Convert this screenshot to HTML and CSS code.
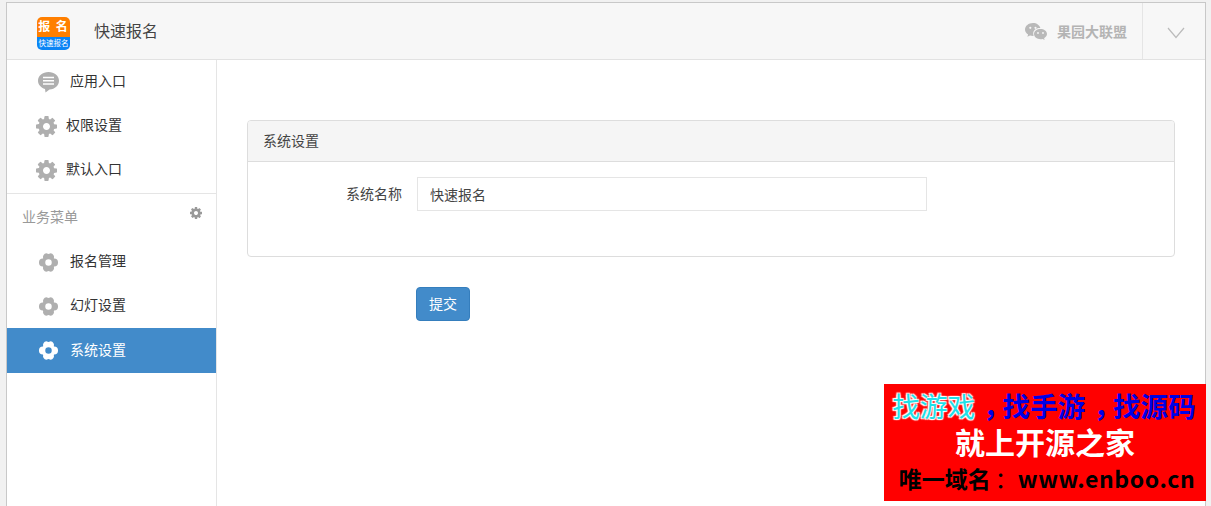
FILE: index.html
```html
<!DOCTYPE html>
<html lang="zh-CN">
<head>
<meta charset="utf-8">
<title>快速报名</title>
<link rel="stylesheet" href="styles.css">
</head>
<body>
<svg class="defs" width="0" height="0" aria-hidden="true">
  <defs>
    <symbol id="cog" viewBox="0 0 1536 1536"><path fill-rule="evenodd" d="M1024 768q0-106-75-181t-181-75-181 75-75 181 75 181 181 75 181-75 75-181zm512-109v222q0 12-8 23t-20 13l-185 28q-19 54-39 91 35 50 107 138 10 12 10 25t-9 23q-27 37-99 108t-94 71q-12 0-26-9l-138-108q-44 23-91 38-16 136-29 186-7 28-36 28h-222q-14 0-24.5-8.5t-11.5-21.5l-28-184q-49-16-90-37l-141 107q-10 9-25 9-14 0-25-11-126-114-165-168-7-10-7-23 0-12 8-23 15-21 51-66.5t54-70.5q-27-50-41-99l-183-27q-13-2-21-12.5t-8-23.5v-222q0-12 8-23t19-13l186-28q14-46 39-92-40-57-107-138-10-12-10-24 0-10 9-23 26-36 98.5-107.5t94.5-71.5q13 0 26 10l138 107q44-23 91-38 16-136 29-186 7-28 36-28h222q14 0 24.5 8.5t11.5 21.5l28 184q49 16 90 37l142-107q9-9 24-9 13 0 25 10 129 119 165 170 7 8 7 22 0 12-8 23-15 21-51 66.5t-54 70.5q26 50 41 98l183 28q13 2 21 12.5t8 23.5z"/></symbol>
    <symbol id="flower" viewBox="0 0 24 24"><path fill-rule="evenodd" d="M18.4 7.5A4.4 4.4 0 0 1 18.4 16.500L18.1 17A4.4 4.4 0 0 1 14.500 22.600L12 21.800L9.500 22.600A4.4 4.4 0 0 1 5.900 17L5.600 16.500A4.4 4.4 0 0 1 5.600 7.500L5.900 7A4.4 4.4 0 0 1 9.500 1.400L12 2.200L14.500 1.400A4.4 4.400 0 0 1 18.100 7ZM12 8.300A3.700 3.700 0 1 0 12 15.700A3.700 3.700 0 1 0 12 8.300Z"/></symbol>
  </defs>
</svg>
<div class="app">
  <header class="topbar">
    <div class="logo">
      <div class="logo-top">报 名</div>
      <div class="logo-bottom">快速报名</div>
    </div>
    <div class="app-title">快速报名</div>
    <div class="account">
      <svg class="wechat" viewBox="0 0 22 17"><path d="M8 0C3.600 0 0 2.900 0 6.500c0 2.100 1.200 3.800 3.100 5L2.400 13.700l2.600-1.300c.9.300 1.900.5 3 .5h.6a5.500 5.500 0 0 1-.3-1.700C7.700 7.700 10.800 5 14.800 5h.6C14.600 2.100 11.600 0 8 0z"/><path d="M22 11.100C22 8 18.900 6 15.500 6S9 8 9 11.100s3.100 5.100 6.500 5.100c.7 0 1.400-.1 2.100-.3l2 1.100-.5-1.800c1.700-1.100 2.900-2.500 2.900-4.100z"/><circle cx="5.300" cy="4.800" r="1.100" fill="#f7f7f7"/><circle cx="10.500" cy="4.800" r="1.100" fill="#f7f7f7"/><circle cx="13" cy="10" r=".9" fill="#f7f7f7"/><circle cx="18" cy="10" r=".9" fill="#f7f7f7"/></svg>
      <span class="account-name">果园大联盟</span>
    </div>
    <div class="toggle">
      <svg class="chevron" viewBox="0 0 18 12"><polyline points="1,1 9,10.500 17,1"/></svg>
    </div>
  </header>
  <div class="content">
    <aside class="sidebar">
      <a class="nav-item first">
        <svg class="nav-icon chat" viewBox="0 0 21 21"><path d="M10.500 0C4.700 0 0 3.900 0 8.800c0 3.800 2.900 7 7 8.200L7.500 20.500 11.500 17.500C17 17.200 21 13.500 21 8.800 21 3.900 16.300 0 10.500 0z"/><path class="chat-lines" d="M5 5.500h11M5 8.800h11M5 12h11"/></svg>
        <span>应用入口</span>
      </a>
      <a class="nav-item tight"><svg class="nav-icon cog"><use href="#cog"/></svg><span>权限设置</span></a>
      <a class="nav-item tight"><svg class="nav-icon cog"><use href="#cog"/></svg><span>默认入口</span></a>
      <div class="nav-section">
        <span>业务菜单</span>
        <svg class="section-cog"><use href="#cog"/></svg>
      </div>
      <a class="nav-item raised"><svg class="nav-icon flower"><use href="#flower"/></svg><span>报名管理</span></a>
      <a class="nav-item raised"><svg class="nav-icon flower"><use href="#flower"/></svg><span>幻灯设置</span></a>
      <a class="nav-item active"><svg class="nav-icon flower"><use href="#flower"/></svg><span>系统设置</span></a>
    </aside>
    <main class="main">
      <section class="panel">
        <div class="panel-heading">系统设置</div>
        <div class="panel-body">
          <div class="form-row">
            <label class="form-label" for="sysname">系统名称</label>
            <input class="form-input" id="sysname" type="text" value="快速报名">
          </div>
        </div>
      </section>
      <button class="btn-submit" type="button">提交</button>
    </main>
  </div>
</div>
<div class="promo">
  <div class="promo-one"><span class="promo-glow">找游戏</span><span class="promo-comma">，</span>找手游<span class="promo-comma">，</span>找源码</div>
  <div class="promo-two">就上开源之家</div>
  <div class="promo-three">唯一域名<span class="promo-colon">：</span><span class="promo-url">www.enboo.cn</span></div>
</div>
</body>
</html>
```
FILE: styles.css
```css
* { box-sizing: border-box; }
html, body { height: 100%; margin: 0; }
body {
  background: #f1f1f1;
  padding: 2px 5px 0 6px;
  overflow: hidden;
  font-family: "Liberation Sans", "Noto Sans CJK SC", sans-serif;
  font-size: 14px;
  color: #333;
}
.defs { position: absolute; }
.app {
  height: 100%;
  display: flex;
  flex-direction: column;
  background: #fff;
  border: 1px solid #c8c8c8;
  border-bottom: 0;
}
.topbar {
  flex: none;
  height: 57px;
  display: flex;
  align-items: center;
  background: #f7f7f7;
  border-bottom: 1px solid #e2e2e2;
  padding-left: 30px;
}
.logo {
  width: 33px;
  height: 33px;
  margin-top: 4px;
  border-radius: 5px;
  overflow: hidden;
  color: #fff;
  text-align: center;
}
.logo-top {
  height: 20px;
  background: #ff7f00;
  font-size: 12px;
  line-height: 21px;
  font-weight: 700;
  letter-spacing: 1px;
  white-space: pre;
}
.logo-bottom {
  height: 13px;
  background: #0a84f5;
  font-size: 7.500px;
  line-height: 13px;
  white-space: nowrap;
}
.app-title { margin-left: 24px; padding-bottom: 2px; font-size: 16px; color: #444; }
.account {
  margin-left: auto;
  display: flex;
  align-items: center;
  height: 100%;
  padding-right: 15px;
  border-right: 1px solid #e5e5e5;
}
.wechat { width: 22px; height: 17px; fill: #b9b9b9; margin-right: 10px; }
.account-name { color: #b4b4b4; font-weight: 700; font-size: 14px; }
.toggle { width: 62px; display: flex; justify-content: center; padding-left: 3px; }
.chevron { width: 18px; height: 12px; margin-top: 4px; fill: none; stroke: #bbb; stroke-width: 1.200; }
.content { flex: 1; display: flex; min-height: 0; }
.sidebar {
  flex: none;
  width: 210px;
  border-right: 1px solid #e5e5e5;
  background: #fff;
}
.nav-item {
  height: 44px;
  display: flex;
  align-items: center;
  padding-left: 31px;
  color: #333;
}
.nav-item.first { height: 43px; }
.nav-item.tight { padding-left: 29px; }
.nav-item span { position: relative; top: -1px; }
.nav-item.first span, .nav-item.raised span, .nav-item.active span { top: -2px; }
.nav-icon { flex: none; margin-right: 11px; fill: #afafaf; }
.chat { width: 21px; height: 21px; margin-top: 1px; }
.chat-lines { fill: none; stroke: #fff; stroke-width: 1.400; }
.cog { width: 21px; height: 21px; margin-top: 2px; margin-right: 9px; }
.flower { width: 21px; height: 21px; }
.nav-section {
  height: 47px;
  margin-top: 2px;
  border-top: 1px solid #e5e5e5;
  padding: 0 14px 2px 15px;
  display: flex;
  align-items: center;
  justify-content: space-between;
  color: #999;
}
.section-cog { width: 12px; height: 12px; fill: #999; position: relative; top: -3px; }
.nav-item.active { height: 45px; background: #428bca; color: #fff; }
.nav-item.active .nav-icon { fill: #fff; }
.main { flex: 1; min-width: 0; padding: 60px 30px 0; }
.panel {
  height: 137px;
  border: 1px solid #ddd;
  border-radius: 4px;
  background: #fff;
}
.panel-heading {
  height: 41px;
  background: #f5f5f5;
  border-bottom: 1px solid #ddd;
  border-radius: 3px 3px 0 0;
  padding-left: 15px;
  line-height: 40px;
  color: #444;
}
.panel-body { padding-top: 15px; }
.form-row { display: flex; align-items: center; gap: 15px; }
.form-label { width: 154px; padding-bottom: 2px; text-align: right; color: #444; }
.form-input {
  width: 510px;
  height: 34px;
  border: 1px solid #e5e5e5;
  padding: 0 12px;
  font: inherit;
  color: #444;
  background: #fff;
  outline: 0;
}
.btn-submit {
  display: block;
  width: 54px;
  height: 34px;
  margin: 30px 0 0 169px;
  padding: 0 0 2px;
  background: #428bca;
  border: 1px solid #357ebd;
  border-radius: 4px;
  color: #fff;
  font: inherit;
}
.promo {
  position: absolute;
  left: 884px;
  top: 384px;
  width: 322px;
  height: 117px;
  background: #f00;
  text-align: center;
  font-family: "Noto Sans CJK SC", sans-serif;
  font-weight: 700;
  white-space: nowrap;
}
.promo-one {
  height: 40px;
  padding: 1px 2px 0 0;
  font-size: 27.600px;
  line-height: 40px;
  color: #0000e6;
}
.promo-glow { color: #1ee0e8; font-weight: 400; text-shadow: 1px 1px 1px #fff, -1px -1px 1px #fff, 1px -1px 1px #fff, -1px 1px 1px #fff; }
.promo-comma { padding-left: 8px; letter-spacing: -8px; }
.promo-two { height: 34px; font-size: 30px; line-height: 34px; color: #fff; }
.promo-three {
  height: 43px;
  padding-left: 4px;
  font-size: 23px;
  line-height: 41px;
  color: #000;
}
.promo-colon { margin-left: 4px; font-family: "Noto Sans CJK TC", sans-serif; font-weight: 400; }
.promo-url { letter-spacing: .6px; }
```
